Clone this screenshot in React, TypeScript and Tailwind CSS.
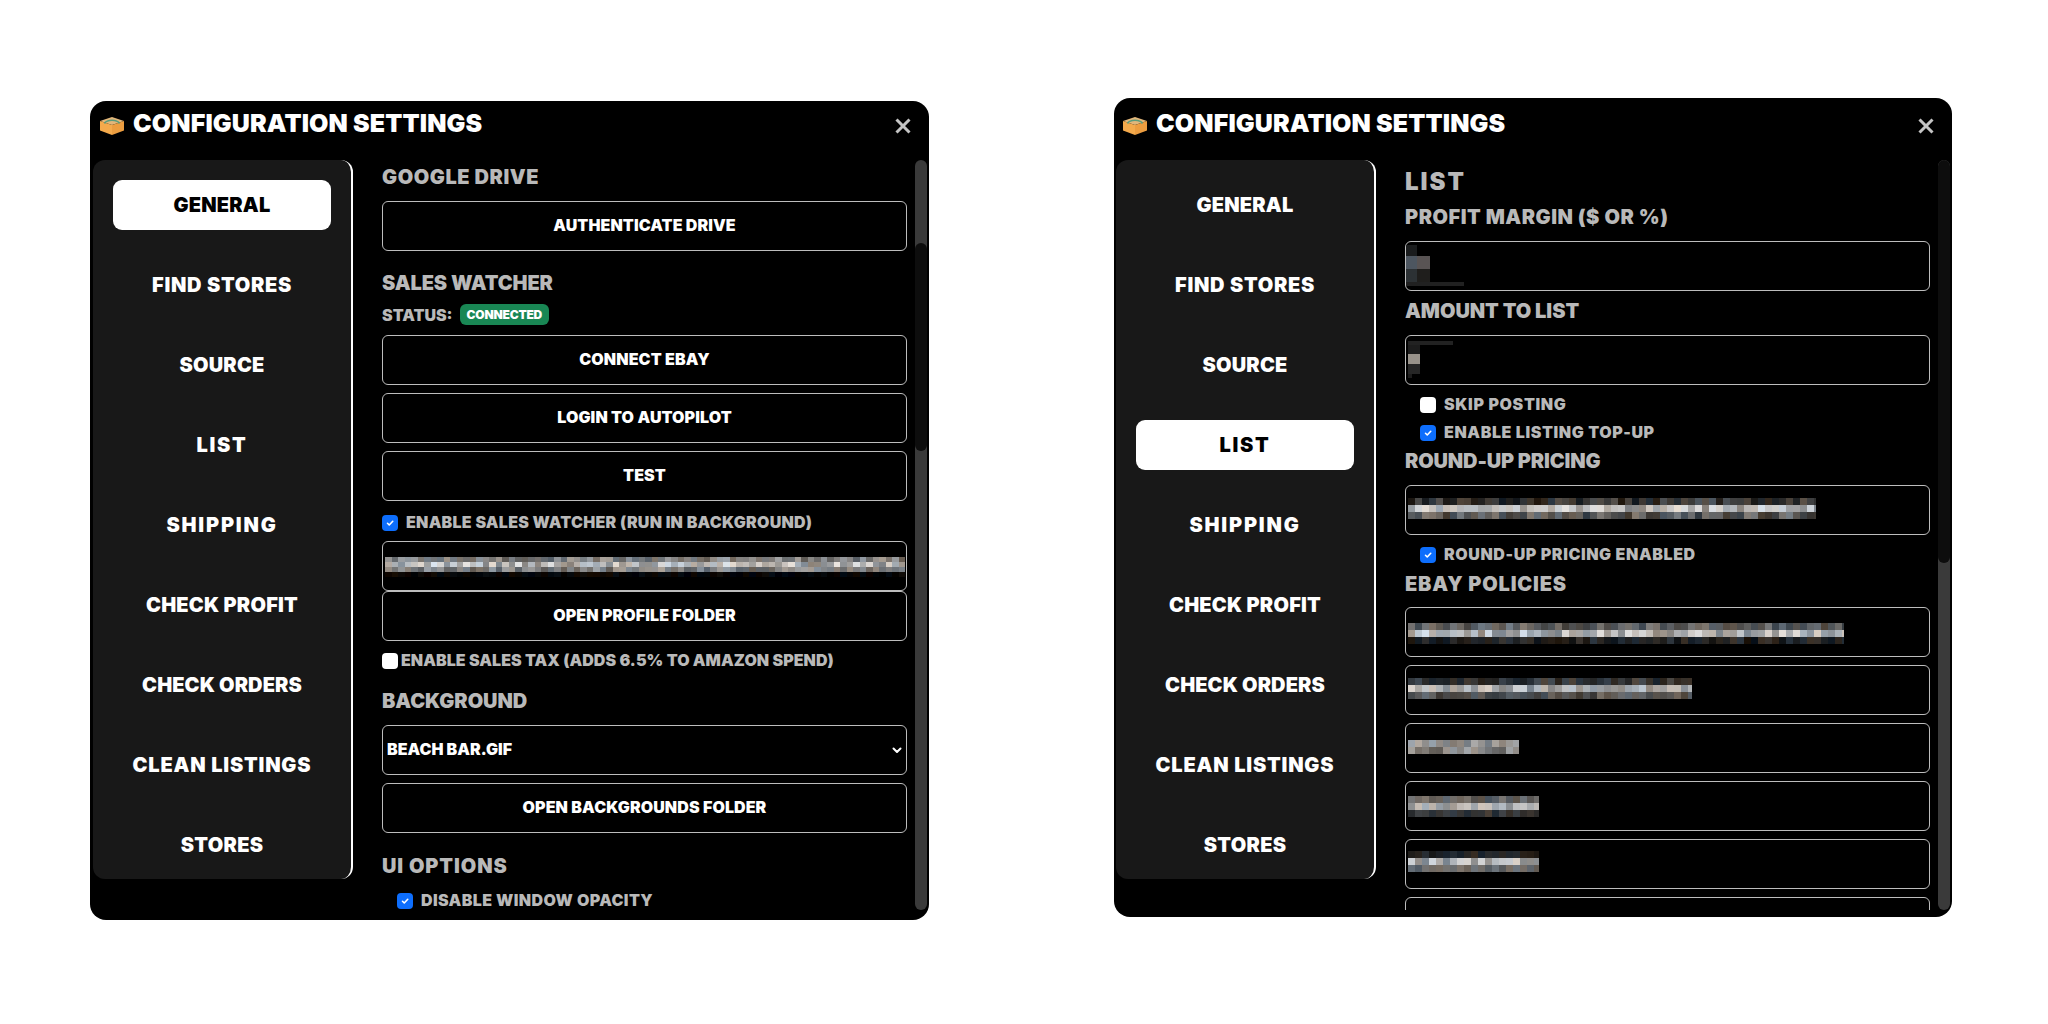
import type { ReactNode } from 'react';

const navItems = [
  { label: 'General', track: 'tracking-[0.2px]' },
  { label: 'Find Stores', track: 'tracking-[0.7px]' },
  { label: 'Source', track: 'tracking-[0.2px]' },
  { label: 'List', track: 'tracking-[1.7px]' },
  { label: 'Shipping', track: 'tracking-[1.8px]' },
  { label: 'Check Profit', track: 'tracking-[0.2px]' },
  { label: 'Check Orders', track: 'tracking-[0.1px]' },
  { label: 'Clean Listings', track: 'tracking-[0.8px]' },
  { label: 'Stores', track: 'tracking-[0.3px]' },
];

type Row = { h: number; lo: number; hi: number };

// deterministic noise so the blurred values look the same on every run
function noise(seed: number) {
  let s = seed;
  return () => {
    s = (s * 16807) % 2147483647;
    return (s % 1000) / 1000;
  };
}

function Mosaic({ width, cell = 7, rows, seed }: { width: number; cell?: number; rows: Row[]; seed: number }) {
  const rand = noise(seed);
  const height = rows.reduce((sum, r) => sum + r.h, 0);
  const cols = Math.ceil(width / cell);
  const rects: ReactNode[] = [];
  let y = 0;
  rows.forEach((row, r) => {
    for (let c = 0; c < cols; c++) {
      const v = row.lo + (row.hi - row.lo) * rand();
      const tint = (rand() - 0.5) * 22;
      const fill = `rgb(${Math.round(v + tint)},${Math.round(v)},${Math.round(v - tint)})`;
      rects.push(<rect key={`${r}-${c}`} x={c * cell} y={y} width={cell} height={row.h} fill={fill} />);
    }
    y += row.h;
  });
  return (
    <svg width={width} height={height} shapeRendering="crispEdges" className="block">
      {rects}
    </svg>
  );
}

function BoxIcon() {
  return (
    <svg width="24" height="18" viewBox="0 0 24 18" className="mt-[3px] shrink-0">
      <polygon points="0,4 12,0 24,4 12,8" fill="#e2b67a" />
      <polygon points="0,4 12,8 12,18 0,13.5" fill="#f4aa4c" />
      <polygon points="12,8 24,4 24,13.5 12,18" fill="#ec9d40" />
      <path d="M4.5 6.5 C7 2.2 17 2.2 19.5 6.5" fill="none" stroke="#5a9c7c" strokeWidth="1.6" />
    </svg>
  );
}

function Check({ on }: { on?: boolean }) {
  return (
    <span className={`flex h-4 w-4 shrink-0 items-center justify-center rounded-[4px] ${on ? 'bg-[#0d6efd]' : 'bg-white'}`}>
      {on && (
        <svg width="10" height="10" viewBox="0 0 20 20">
          <path d="M5 10.5l3.5 3.5L15.5 6.5" fill="none" stroke="#fff" strokeWidth="3.2" strokeLinecap="round" strokeLinejoin="round" />
        </svg>
      )}
    </span>
  );
}

function Heading({ children, className = '' }: { children: ReactNode; className?: string }) {
  return <h3 className={`h-[15px] text-[20px] leading-[17px] whitespace-nowrap text-[#b9b9b9] ${className}`}>{children}</h3>;
}

function Btn({ children, className = '' }: { children: ReactNode; className?: string }) {
  return (
    <button className={`block h-[50px] w-full rounded-[6px] border border-[#bdbdbd] bg-black pb-[2px] text-center text-[16px] font-black tracking-[0.1px] text-white uppercase ${className}`}>
      {children}
    </button>
  );
}

function Field({ children, className = '' }: { children?: ReactNode; className?: string }) {
  return <div className={`h-[50px] w-full overflow-hidden rounded-[6px] border border-[#bdbdbd] bg-black ${className}`}>{children}</div>;
}

function CheckRow({ on, label, className = '', gap = 'gap-2' }: { on?: boolean; label: string; className?: string; gap?: string }) {
  return (
    <label className={`flex h-4 items-center text-[16px] leading-4 whitespace-nowrap text-[#b9b9b9] ${gap} ${className}`}>
      <Check on={on} />
      <span className="-mt-[2px]">{label}</span>
    </label>
  );
}

function Window({ active, head, className, scroll, children }: { active: string; head: string; className: string; scroll: ReactNode; children: ReactNode }) {
  return (
    <div className={`flex h-[819px] shrink-0 flex-col overflow-hidden rounded-[16px] bg-black [font-family:Inter,'Liberation_Sans',sans-serif] font-black uppercase ${className}`}>
      <header className={`flex shrink-0 items-start pl-[9px] ${head}`}>
        <BoxIcon />
        <h2 className="ml-[9px] h-[18px] text-[25px] leading-[18px] tracking-[0.12px] whitespace-nowrap text-white">Configuration Settings</h2>
        <svg width="16" height="16" viewBox="0 0 16 16" className="mt-1 mr-[18px] ml-auto">
          <path d="M1.5 1.5l13 13M14.5 1.5l-13 13" stroke="#c4c4c4" strokeWidth="3" />
        </svg>
      </header>
      <div className="flex">
        <nav className="ml-[2px] flex h-[719px] w-[260px] shrink-0 flex-col gap-[30px] rounded-[12px] border-r-2 border-white bg-[#181818] px-5 pt-5">
          {navItems.map((item) => (
            <div
              key={item.label}
              className={`h-[50px] shrink-0 rounded-[9px] text-center text-[20px] leading-[50px] ${item.track} ${item.label === active ? 'bg-white text-black' : 'text-white'}`}
            >
              {item.label}
            </div>
          ))}
        </nav>
        <div className="ml-[29px] h-[750px] w-[525px] shrink-0 overflow-hidden">{children}</div>
        <div className="ml-2 h-[750px] w-3 shrink-0 overflow-hidden rounded-[6px] bg-[#3a3a3a]">{scroll}</div>
      </div>
    </div>
  );
}

function GeneralTab() {
  return (
    <div className="pt-[9px]">
      <Heading className="tracking-[0.55px]">Google Drive</Heading>
      <Btn className="mt-[17px]">Authenticate Drive</Btn>
      <Heading className="mt-6 tracking-[-0.1px]">Sales Watcher</Heading>
      <div className="mt-[14px] flex h-[21px] items-center text-[16px] text-[#b9b9b9]">
        <span>Status:</span>
        <span className="ml-[7px] flex h-[21px] items-center rounded-[6px] bg-[#198754] px-[7px] text-[12px] leading-none tracking-[-0.2px] text-white">Connected</span>
      </div>
      <Btn className="mt-[10px]">Connect eBay</Btn>
      <Btn className="mt-2">Login to Autopilot</Btn>
      <Btn className="mt-2">Test</Btn>
      <CheckRow on className="mt-[14px] tracking-[0.26px]" label="Enable Sales Watcher (Run in Background)" />
      <Field className="mt-[10px] pt-[15px] pl-[2px]">
        <Mosaic
          seed={4711}
          width={520}
          cell={6.5}
          rows={[
            { h: 5, lo: 90, hi: 165 },
            { h: 5, lo: 130, hi: 230 },
            { h: 5, lo: 90, hi: 165 },
            { h: 5, lo: 0, hi: 14 },
          ]}
        />
      </Field>
      <Btn>Open Profile Folder</Btn>
      <CheckRow className="mt-3 tracking-[0.06px]" gap="gap-[3px]" label="Enable Sales Tax (Adds 6.5% to Amazon Spend)" />
      <Heading className="mt-6 tracking-[-0.05px]">Background</Heading>
      <div className="mt-[17px] flex h-[50px] items-center justify-between rounded-[6px] border border-[#bdbdbd] bg-black pr-[3px] pb-[2px] pl-1 text-[16px] text-white">
        <span>Beach Bar.gif</span>
        <svg width="12" height="12" viewBox="0 0 12 12" className="mt-[2px]">
          <path d="M2.5 4.5L6 8l3.5-3.5" fill="none" stroke="#fff" strokeWidth="2" strokeLinecap="round" strokeLinejoin="round" />
        </svg>
      </div>
      <Btn className="mt-2">Open Backgrounds Folder</Btn>
      <Heading className="mt-[25px] tracking-[0.9px]">UI Options</Heading>
      <CheckRow on className="mt-5 ml-[15px] tracking-[0.4px]" label="Disable Window Opacity" />
    </div>
  );
}

function ListTab() {
  const three = (a: number, b: number, c: number, d: number, e: number, f: number): Row[] => [
    { h: 7, lo: a, hi: b },
    { h: 7, lo: c, hi: d },
    { h: 7, lo: e, hi: f },
  ];
  return (
    <div className="pt-[13px]">
      <h3 className="h-[17px] text-[24px] leading-[17px] tracking-[2px] text-[#b9b9b9]">List</h3>
      <Heading className="mt-[19px] tracking-[0.5px]">Profit Margin ($ or %)</Heading>
      <Field className="mt-[17px] pt-[3px]">
        <svg width="58" height="41" shapeRendering="crispEdges" className="block">
          <rect x="0" y="0" width="11" height="11" fill="#1a1c1d" />
          <rect x="0" y="11" width="11" height="13" fill="#4d5660" />
          <rect x="11" y="11" width="13" height="13" fill="#595454" />
          <rect x="0" y="24" width="11" height="13" fill="#2c3134" />
          <rect x="11" y="24" width="13" height="13" fill="#1f1e1c" />
          <rect x="0" y="37" width="58" height="4" fill="#212121" />
        </svg>
      </Field>
      <Heading className="mt-3 tracking-[-0.05px]">Amount to List</Heading>
      <Field className="mt-[17px] pt-[5px] pl-[2px]">
        <svg width="45" height="37" shapeRendering="crispEdges" className="block">
          <rect x="0" y="0" width="45" height="4" fill="#222" />
          <rect x="0" y="4" width="12" height="9" fill="#1c1c1c" />
          <rect x="0" y="13" width="12" height="10" fill="#98928a" />
          <rect x="0" y="23" width="12" height="10" fill="#262626" />
          <rect x="0" y="33" width="4" height="4" fill="#1c1c1c" />
        </svg>
      </Field>
      <CheckRow className="mt-3 ml-[15px] tracking-[0.65px]" label="Skip Posting" />
      <CheckRow on className="mt-3 ml-[15px] tracking-[0.6px]" label="Enable Listing Top-Up" />
      <Heading className="mt-3 tracking-[-0.15px]">Round-Up Pricing</Heading>
      <Field className="mt-[17px] pt-3 pl-[2px]">
        <Mosaic seed={9031} width={408} rows={three(20, 85, 130, 225, 50, 125)} />
      </Field>
      <CheckRow on className="mt-3 ml-[15px] tracking-[0.6px]" label="Round-Up Pricing Enabled" />
      <Heading className="mt-[13px] tracking-[0.8px]">eBay Policies</Heading>
      <Field className="mt-4 pt-[15px] pl-[2px]">
        <Mosaic seed={2203} width={436} rows={three(60, 125, 130, 225, 14, 55)} />
      </Field>
      <Field className="mt-2 pt-3 pl-[2px]">
        <Mosaic seed={7712} width={284} rows={three(30, 75, 130, 220, 50, 110)} />
      </Field>
      <Field className="mt-2 pt-4 pl-[2px]">
        <Mosaic seed={5519} width={111} rows={[{ h: 7, lo: 110, hi: 175 }, { h: 7, lo: 90, hi: 170 }]} />
      </Field>
      <Field className="mt-2 pt-[14px] pl-[2px]">
        <Mosaic seed={3187} width={131} rows={three(75, 120, 140, 215, 40, 70)} />
      </Field>
      <Field className="mt-2 pt-[11px] pl-[2px]">
        <Mosaic seed={8641} width={131} rows={three(22, 45, 130, 220, 85, 125)} />
      </Field>
      <Field className="mt-2" />
    </div>
  );
}

export default function App() {
  return (
    <div className="flex min-h-screen items-start bg-white pt-[98px] pl-[91px]">
      <Window
        active="General"
        head="h-[59px] pt-[13px]"
        className="mt-[3px] -ml-px w-[839px] pl-px"
        scroll={<div className="mt-[83px] h-[208px] rounded-[6px] bg-[#0d0d0d]" />}
      >
        <GeneralTab />
      </Window>
      <Window
        active="List"
        head="h-[62px] pt-[16px]"
        className="ml-[185px] w-[838px]"
        scroll={<div className="h-[403px] rounded-[6px] bg-[#0d0d0d]" />}
      >
        <ListTab />
      </Window>
    </div>
  );
}
